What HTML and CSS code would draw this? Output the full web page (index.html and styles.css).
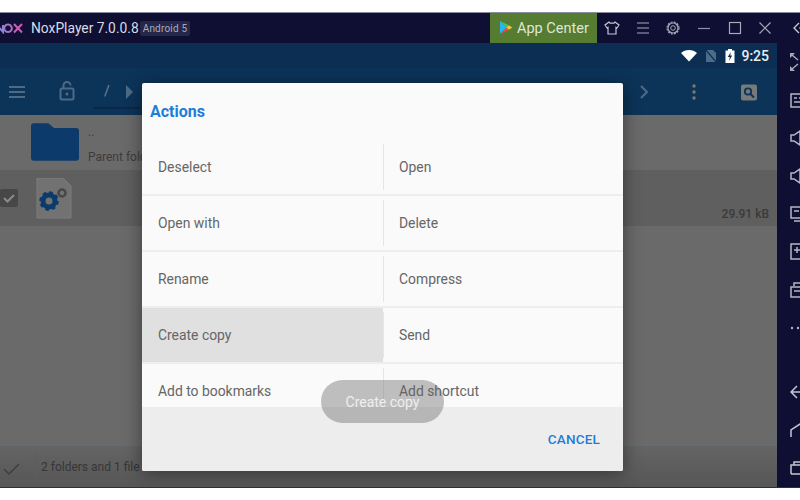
FILE: index.html
```html
<!DOCTYPE html>
<html lang="en">
<head>
<meta charset="utf-8">
<title>NoxPlayer</title>
<link rel="stylesheet" href="styles.css">
</head>
<body>
<div class="window">
  <header class="titlebar">
    <svg class="logo" width="24" height="12" viewBox="0 0 24 12"><defs><linearGradient id="lg" x1="0" x2="1" y1="0" y2="0"><stop offset="0" stop-color="#7f8fe0"/><stop offset="1" stop-color="#e04fb0"/></linearGradient></defs><path d="M-3 10V3l6 7V3M8 2.500a3.800 3.800 0 1 0 .01 0M14 2l8 8.500M22 2l-8 8.500" fill="none" stroke="url(#lg)" stroke-width="2"/></svg>
    <span class="appname">NoxPlayer 7.0.0.8</span>
    <span class="badge">Android 5</span>
    <span class="grow"></span>
    <div class="appcenter">
      <svg width="14" height="14" viewBox="0 0 14 14"><path d="M1 0v13l6.500-6.500z" fill="#25b7ee"/><path d="M1 0l6.500 6.500 2.300-2.300z" fill="#49c46a"/><path d="M1 13l6.500-6.500 2.300 2.300z" fill="#ea4b4b"/><path d="M9.800 4.200l3.600 2.300-3.600 2.300-2.300-2.300z" fill="#f6c433"/></svg>
      <span>App Center</span>
    </div>
    <div class="winbtns">
      <svg width="16" height="16" viewBox="0 0 16 16"><path d="M5 2L1 5l2 3 1-.7V14h8V7.300l1 .7 2-3-4-3-1 1.200H6z" fill="none" stroke="#c4c7d2" stroke-width="1.200"/></svg>
      <svg width="16" height="16" viewBox="0 0 16 16"><path d="M2 3h12M2 8h12M2 13h12" stroke="#a6a9b8" stroke-width="1.200"/></svg>
      <svg width="16" height="16" viewBox="0 0 16 16"><circle cx="8" cy="8" r="2.300" fill="none" stroke="#a6a9b8"/><circle cx="8" cy="8" r="5" fill="none" stroke="#a6a9b8" stroke-width="1.200"/><circle cx="8" cy="8" r="6" fill="none" stroke="#a6a9b8" stroke-width="1.200" stroke-dasharray="2 1.140"/></svg>
      <svg width="16" height="16" viewBox="0 0 16 16"><path d="M2 8.500h12" stroke="#8f92a4" stroke-width="1.200"/></svg>
      <svg width="16" height="16" viewBox="0 0 16 16"><rect x="2.500" y="2.500" width="11" height="11" fill="none" stroke="#a6a9b8" stroke-width="1.200"/></svg>
      <svg width="16" height="16" viewBox="0 0 16 16"><path d="M2.500 2.500l11 11M13.500 2.500l-11 11" stroke="#a6a9b8" stroke-width="1.200"/></svg>
      <svg class="collapse" width="12" height="16" viewBox="0 0 12 16"><path d="M6 3L1 8l5 5M12 3L7 8l5 5" fill="none" stroke="#c4c7d2" stroke-width="1.400"/></svg>
    </div>
  </header>
  <div class="main">
    <div class="android">
      <div class="statusbar">
        <svg width="16" height="13" viewBox="0 0 16 12"><path d="M0 3.500C4 -.5 12 -.5 16 3.500L8 12z" fill="#fff"/></svg>
        <svg width="12" height="14" viewBox="0 0 12 14"><path d="M1 1h7l3 3v9H1z" fill="#4d6c8a"/><path d="M0 0l12 14" stroke="#0b2e52" stroke-width="1.200"/></svg>
        <svg width="10" height="14" viewBox="0 0 10 14"><path d="M3 0h4v1.500h2.500V14H.5V1.500H3z" fill="#fff"/><path d="M5.800 3L2.800 8h2l-.8 4 3.200-5.500h-2z" fill="#0b2e52"/></svg>
        <span class="clock">9:25</span>
      </div>
      <div class="toolbar">
        <svg width="18" height="14" viewBox="0 0 18 14"><path d="M1 2h16M1 7h16M1 12h16" stroke="#4e6a84" stroke-width="2"/></svg>
        <svg class="lock" width="16" height="20" viewBox="0 0 16 20"><rect x="1.500" y="7.500" width="13" height="11" rx="1.500" fill="none" stroke="#4e6a84" stroke-width="2"/><path d="M4.500 7V4.500a3.500 3.500 0 0 1 7 0" fill="none" stroke="#4e6a84" stroke-width="2"/><circle cx="8" cy="13" r="1.500" fill="#4e6a84"/></svg>
        <div class="crumb"><span>/</span><svg width="7" height="14" viewBox="0 0 7 14"><path d="M0 0l7 7-7 7z" fill="#4e6a84"/></svg></div>
        <span class="grow"></span>
        <svg class="chev" width="8" height="14" viewBox="0 0 8 14"><path d="M1 1l6 6-6 6" fill="none" stroke="#4e6a84" stroke-width="2"/></svg>
        <svg class="dots" width="4" height="16" viewBox="0 0 4 16"><circle cx="2" cy="2" r="1.700" fill="#7b7a70"/><circle cx="2" cy="8" r="1.700" fill="#7b7a70"/><circle cx="2" cy="14" r="1.700" fill="#7b7a70"/></svg>
        <svg class="search" width="16" height="17" viewBox="0 0 16 16"><rect width="16" height="16" rx="2" fill="#777a78"/><circle cx="7" cy="7" r="3.200" fill="none" stroke="#0c3459" stroke-width="1.800"/><path d="M9.500 9.500l3.500 3.500" stroke="#0c3459" stroke-width="2"/></svg>
      </div>
      <div class="files">
        <div class="row parent">
          <svg class="folder" width="48" height="39" viewBox="0 0 50 40"><path d="M3 1h15l6 5h23a3 3 0 0 1 3 3v28a3 3 0 0 1-3 3H3a3 3 0 0 1-3-3V4a3 3 0 0 1 3-3z" fill="#0b3a6b"/></svg>
          <div class="fname"><span>..</span><span>Parent folder</span></div>
        </div>
        <div class="row selected">
          <span class="check"><svg width="18" height="18" viewBox="0 0 18 18"><rect width="18" height="18" rx="2" fill="#474747"/><path d="M4 9l3.500 3.500L14 6" fill="none" stroke="#8a8a8a" stroke-width="2"/></svg></span>
          <svg class="apk" width="36" height="41" viewBox="0 0 36 41"><path d="M1 0h26l8 8v32H1z" fill="#727272" stroke="#7c7c7c"/><circle cx="13" cy="23" r="6" fill="none" stroke="#0b3a6b" stroke-width="5"/><circle cx="13" cy="23" r="8.500" fill="none" stroke="#0b3a6b" stroke-width="2.500" stroke-dasharray="3.500 3.170"/><circle cx="26" cy="15" r="3.500" fill="none" stroke="#474747" stroke-width="2.500"/></svg>
          <span class="grow"></span>
          <span class="size">29.91 kB</span>
        </div>
        <span class="grow"></span>
        <div class="bottombar">
          <svg width="18" height="14" viewBox="0 0 18 14"><path d="M1 7l5 5L16 2" fill="none" stroke="#3f3f3f" stroke-width="1.500"/></svg>
          <span class="summary">2 folders and 1 file selected</span>
        </div>
      </div>
    </div>
    <aside class="sidebar">
      <div class="slot"><svg width="9" height="20" viewBox="0 0 9 20"><path d="M0 1h5L0 6zM0 19h5l-5-5z" fill="#a6a9b8"/><path d="M2 3l6 5M2 17l6-5" stroke="#a6a9b8" stroke-width="1.500"/></svg></div>
      <div class="slot"><svg width="20" height="16" viewBox="0 0 20 16"><rect x="1" y="2" width="22" height="13" fill="none" stroke="#b4b6c4" stroke-width="1.500"/><path d="M4 6h3M9 6h3M4 10h8" stroke="#b4b6c4" stroke-width="1.500"/></svg></div>
      <div class="slot"><svg width="20" height="18" viewBox="0 0 20 18"><path d="M1 6h3l6-4v14l-6-4H1z" fill="none" stroke="#b4b6c4" stroke-width="1.500"/></svg></div>
      <div class="slot"><svg width="20" height="18" viewBox="0 0 20 18"><path d="M1 6h3l6-4v14l-6-4H1z" fill="none" stroke="#b4b6c4" stroke-width="1.500"/></svg></div>
      <div class="slot"><svg width="20" height="18" viewBox="0 0 20 18"><rect x="1" y="2" width="22" height="11" fill="none" stroke="#b4b6c4" stroke-width="1.500"/><path d="M4 16h18M4 6h5" stroke="#b4b6c4" stroke-width="1.500"/></svg></div>
      <div class="slot"><svg width="20" height="18" viewBox="0 0 20 18"><rect x="1" y="1" width="22" height="15" fill="none" stroke="#b4b6c4" stroke-width="1.500"/><path d="M7 4v6M4 7h6" stroke="#b4b6c4" stroke-width="1.500"/></svg></div>
      <div class="slot"><svg width="20" height="16" viewBox="0 0 20 16"><path d="M4 4V1h18M1 5h22v10H1zM4 9h6" fill="none" stroke="#b4b6c4" stroke-width="1.500"/></svg></div>
      <div class="slot"><svg width="20" height="4" viewBox="0 0 20 4"><circle cx="2" cy="2" r="1.200" fill="#b4b6c4"/><circle cx="8" cy="2" r="1.200" fill="#b4b6c4"/></svg></div>
      <div class="slot back"><svg width="20" height="14" viewBox="0 0 20 14"><path d="M7 1L1 7l6 6M1 7h20" fill="none" stroke="#c4c7d2" stroke-width="1.500"/></svg></div>
      <div class="slot"><svg width="20" height="14" viewBox="0 0 20 14"><path d="M1 14V7l9-6h12" fill="none" stroke="#c4c7d2" stroke-width="1.500"/></svg></div>
      <div class="slot"><svg width="20" height="14" viewBox="0 0 20 14"><path d="M1 13V4h21M4 4V1h18M1 13h21" fill="none" stroke="#c4c7d2" stroke-width="1.500"/></svg></div>
    </aside>
  </div>
  <section class="dialog">
    <h2 class="dialog-title">Actions</h2>
    <div class="actions">
      <div class="action"><span>Deselect</span></div>
      <div class="action"><span>Open</span></div>
      <div class="action"><span>Open with</span></div>
      <div class="action"><span>Delete</span></div>
      <div class="action"><span>Rename</span></div>
      <div class="action"><span>Compress</span></div>
      <div class="action pressed"><span>Create copy</span></div>
      <div class="action"><span>Send</span></div>
      <div class="action"><span>Add to bookmarks</span></div>
      <div class="action"><span>Add shortcut</span></div>
    </div>
    <footer class="dialog-foot"><span class="cancel">CANCEL</span></footer>
  </section>
  <div class="toast">Create copy</div>
</div>
</body>
</html>
```
FILE: styles.css
```css
* { box-sizing: border-box; }
html, body { margin: 0; height: 100%; background: #fff; overflow: hidden; }
body { padding-top: 12px; font-family: Roboto, sans-serif; }
.window { position: relative; width: 800px; height: 476px; display: flex; flex-direction: column; border-top: 1px solid #8b8ca0; border-bottom: 1px solid #2a2c55; background: #0e0f33; overflow: hidden; }
.grow { flex: 1; }
.titlebar { height: 30px; flex: none; display: flex; align-items: center; color: #d9dbe4; overflow: hidden; }
.logo { flex: none; margin-right: 7px; }
.appname { font-size: 13.800px; white-space: nowrap; }
.badge { font-size: 10px; padding: 0 3px; margin-left: 1px; height: 15px; line-height: 15px; background: #24264a; color: #a9abba; border-radius: 2px; letter-spacing: .2px; }
.appcenter { width: 107px; height: 30px; background: #567c32; display: flex; align-items: center; gap: 4px; padding-left: 9px; font-size: 14.500px; color: #dfe6d6; white-space: nowrap; }
.winbtns { width: 203px; display: flex; align-items: center; gap: 14.700px; padding-left: 7px; flex: none; }
.winbtns svg { flex: none; }
.winbtns .collapse { margin-left: 5px; }
.main { flex: 1; display: flex; min-height: 0; }
.android { width: 777px; display: flex; flex-direction: column; background: #6a6a6a; }
.statusbar { height: 25px; background: #0b2e52; display: flex; align-items: center; justify-content: flex-end; gap: 8px; padding-right: 8px; }
.clock { font-size: 14px; font-weight: 500; color: #e8edf2; margin-left: -2px; }
.toolbar { height: 47px; background: #0c3459; display: flex; align-items: center; padding: 0 20px 0 8px; }
.lock { margin-left: 33px; margin-top: -2px; }
.crumb { margin-left: 18px; width: 47px; height: 41px; padding: 15px 0 0 11px; display: flex; gap: 16px; border-bottom: 2px solid #0a2947; color: #6f8aa3; font-size: 14px; align-items: flex-start; align-self: flex-start; }
.crumb svg { margin-top: 2px; }
.chev { margin-right: 44px; margin-left: -2px; }
.dots { margin-right: 45px; }
.search { margin-top: 2px; }
.files { flex: 1; display: flex; flex-direction: column; min-height: 0; }
.row { display: flex; align-items: center; }
.parent { height: 55px; padding: 0 0 2px 31px; gap: 9px; }
.fname { display: flex; flex-direction: column; gap: 11px; font-size: 12px; color: #3c3c3c; padding-top: 6px; line-height: 14px; white-space: nowrap; }
.selected { height: 56px; background: #5f5f5f; padding: 0 8px 0 0; }
.check { display: flex; width: 36px; }
.size { font-size: 12px; font-weight: 500; color: #3a3a3a; margin-top: 31px; }
.bottombar { height: 41px; border-top: 1px solid #5e6468; display: flex; align-items: center; padding-left: 3px; background: linear-gradient(#646464, #565656); }
.bottombar svg { margin-right: 15px; margin-top: 3px; }
.summary { border-left: 1px solid #5d5d5d; padding: 8px 0 8px 4px; font-size: 12px; color: #363636; white-space: nowrap; }
.sidebar { width: 23px; display: flex; flex-direction: column; background: #0e0f33; padding-left: 13px; overflow: hidden; flex: none; }
.slot { height: 38px; flex: none; display: flex; align-items: center; }
.slot svg { flex: none; }
.back { margin-top: 26px; }
.dialog { position: absolute; left: 142px; top: 70px; width: 481px; height: 388px; background: #fafafa; border-radius: 2px; box-shadow: 0 2px 18px rgba(0,0,0,.45); display: flex; flex-direction: column; overflow: hidden; }
.dialog-title { margin: 0; height: 57px; padding: 20px 0 0 8px; font-size: 16px; line-height: 18px; font-weight: 700; color: #1e7dd9; }
.actions { flex: 1; min-height: 0; display: grid; grid-template-columns: 241px 240px; grid-auto-rows: 56px; overflow: hidden; }
.action { display: flex; align-items: center; padding-left: 16px; font-size: 13.900px; color: #666; border-bottom: 2px solid #eee; position: relative; }
.action:nth-child(even)::before { content: ""; position: absolute; left: 0; top: 4px; bottom: 4px; width: 1px; background: #e6e6e6; }
.action span { margin-top: 0; }
.pressed { background: #e0e0e0; }
.dialog-foot { height: 64px; flex: none; background: #ededed; display: flex; justify-content: flex-end; align-items: center; padding-right: 23px; }
.cancel { font-size: 13.500px; font-weight: 500; color: #1e7dd9; letter-spacing: .2px; }
.toast { position: absolute; left: 321px; top: 367px; width: 123px; height: 43px; border-radius: 22px; background: rgba(100,100,100,.4); color: #efefef; font-size: 14px; display: flex; align-items: center; justify-content: center; }
```
